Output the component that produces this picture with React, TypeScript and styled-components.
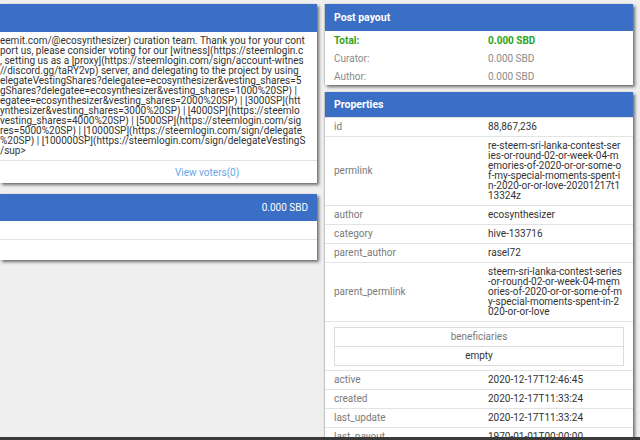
import { FC } from "react";
import styled, { createGlobalStyle } from "styled-components";

const GlobalStyle = createGlobalStyle`
  html, body {
    margin: 0;
    padding: 0;
    overflow: hidden;
    background-color: #efefef;
  }
  body {
    font-family: Roboto, "Liberation Sans", Arial, sans-serif;
    font-size: 10px;
    color: #333;
  }
`;

const Page = styled.div`
  display: flex;
  align-items: flex-start;
  gap: 8px;
  padding-top: 4px;
  height: 440px;
  box-sizing: border-box;
`;

const LeftColumn = styled.div`
  width: 317px;
  flex-shrink: 0;
  display: flex;
  flex-direction: column;
  gap: 11px;
`;

const RightColumn = styled.div`
  width: 308px;
  flex-shrink: 0;
  display: flex;
  flex-direction: column;
  gap: 7px;
`;

const Card = styled.section`
  background-color: #fff;
  box-shadow: 2px 2px 3px rgba(0, 0, 0, 0.55), -1px 0 1px rgba(0, 0, 0, 0.15);
  overflow: hidden;
`;

type HeaderProps = { $height: number; $end?: boolean };
const CardHeader = styled.header<HeaderProps>`
  height: ${(p) => p.$height}px;
  background-color: #3b6fc6;
  color: #fff;
  display: flex;
  align-items: center;
  justify-content: ${(p) => (p.$end ? "flex-end" : "flex-start")};
  padding: 0 9px;
  box-sizing: border-box;
`;

const HeaderTitle = styled.span`
  font-weight: 700;
  font-size: 10.5px;
`;

const HeaderValue = styled.span`
  font-size: 10px;
`;

const CodeBlock = styled.div`
  padding: 4px 9px 4px 0;
  line-height: 10px;
  color: #333;
`;

const CodeLine = styled.div`
  white-space: nowrap;
  overflow: hidden;
`;

const CardFooter = styled.div`
  height: 22px;
  border-top: 1px solid #e2e2e2;
  display: flex;
  align-items: center;
  padding-left: 175px;
  color: #6aa6e8;
`;

type EmptyRowProps = { $height: number };
const EmptyRow = styled.div<EmptyRowProps>`
  height: ${(p) => p.$height}px;
  & + & {
    border-top: 1px solid #e2e2e2;
  }
`;

type PayoutRowProps = { $tone: "total" | "muted" };
const PayoutRow = styled.div<PayoutRowProps>`
  display: grid;
  grid-template-columns: 154px 154px;
  height: 18px;
  align-items: center;
  color: ${(p) => (p.$tone === "total" ? "#2ea31a" : "#8a8a8a")};
  font-weight: ${(p) => (p.$tone === "total" ? 700 : 400)};
`;

const PayoutCell = styled.span`
  padding: 0 9px;
`;

const PropTable = styled.table`
  width: 100%;
  border-collapse: collapse;
  table-layout: fixed;
`;

type CellProps = { $label?: boolean };
const Cell = styled.td<CellProps>`
  padding: 4px 9px;
  line-height: 10px;
  border-top: 1px solid #e3e3e3;
  vertical-align: middle;
  color: ${(p) => (p.$label ? "#7a7a7a" : "#333")};
`;

// long permlinks wrap mid-word, as in the page they come from
const WrapLine = styled.span`
  display: block;
  white-space: nowrap;
`;

const NestedCell = styled.td`
  padding: 5px 9px 4px;
  border-top: 1px solid #e3e3e3;
`;

const NestedTable = styled.table`
  width: 100%;
  border-collapse: collapse;
  border: 1px solid #dcdcdc;
`;

type NestedTdProps = { $muted?: boolean };
const NestedTd = styled.td<NestedTdProps>`
  text-align: center;
  padding: 4px;
  line-height: 10px;
  color: ${(p) => (p.$muted ? "#7a7a7a" : "#333")};
  border-top: 1px solid #dcdcdc;
`;

const WindowEdge = styled.div`
  position: fixed;
  left: 0;
  right: 0;
  bottom: 0;
  height: 3px;
  background-color: #3a3a3a;
`;

const bodyLines = [
  "eemit.com/@ecosynthesizer) curation team. Thank you for your cont",
  "port us, please consider voting for our [witness](https://steemlogin.c",
  ", setting us as a [proxy](https://steemlogin.com/sign/account-witnes",
  "//discord.gg/taRY2vp) server, and delegating to the project by using",
  "elegateVestingShares?delegatee=ecosynthesizer&vesting_shares=5",
  "gShares?delegatee=ecosynthesizer&vesting_shares=1000%20SP) |",
  "egatee=ecosynthesizer&vesting_shares=2000%20SP) | [3000SP](htt",
  "ynthesizer&vesting_shares=3000%20SP) | [4000SP](https://steemlo",
  "vesting_shares=4000%20SP) | [5000SP](https://steemlogin.com/sig",
  "res=5000%20SP) | [10000SP](https://steemlogin.com/sign/delegate",
  "%20SP) | [100000SP](https://steemlogin.com/sign/delegateVestingS",
  "/sup>",
];

type Prop = [string, string | string[]];

const upperProps: Prop[] = [
  ["id", "88,867,236"],
  [
    "permlink",
    [
      "re-steem-sri-lanka-contest-ser",
      "ies-or-round-02-or-week-04-m",
      "emories-of-2020-or-or-some-o",
      "f-my-special-moments-spent-i",
      "n-2020-or-or-love-20201217t1",
      "13324z",
    ],
  ],
  ["author", "ecosynthesizer"],
  ["category", "hive-133716"],
  ["parent_author", "rasel72"],
  [
    "parent_permlink",
    [
      "steem-sri-lanka-contest-series",
      "-or-round-02-or-week-04-mem",
      "ories-of-2020-or-or-some-of-m",
      "y-special-moments-spent-in-2",
      "020-or-or-love",
    ],
  ],
];

const lowerProps: Prop[] = [
  ["active", "2020-12-17T12:46:45"],
  ["created", "2020-12-17T11:33:24"],
  ["last_update", "2020-12-17T11:33:24"],
  ["last_payout", "1970-01-01T00:00:00"],
];

const PropRow: FC<{ name: string; value: string | string[] }> = ({ name, value }) => (
  <tr>
    <Cell $label>{name}</Cell>
    <Cell>
      {Array.isArray(value)
        ? value.map((part, i) => <WrapLine key={i}>{part}</WrapLine>)
        : value}
    </Cell>
  </tr>
);

const App: FC = () => {
  return (
    <>
      <GlobalStyle />
      <Page>
        <LeftColumn>
          <Card>
            <CardHeader $height={28} />
            <CodeBlock>
              {bodyLines.map((line, i) => (
                <CodeLine key={i}>{line}</CodeLine>
              ))}
            </CodeBlock>
            <CardFooter>View voters(0)</CardFooter>
          </Card>
          <Card>
            <CardHeader $height={27} $end>
              <HeaderValue>0.000 SBD</HeaderValue>
            </CardHeader>
            <EmptyRow $height={18} />
            <EmptyRow $height={20} />
          </Card>
        </LeftColumn>

        <RightColumn>
          <Card>
            <CardHeader $height={27}>
              <HeaderTitle>Post payout</HeaderTitle>
            </CardHeader>
            <PayoutRow $tone="total">
              <PayoutCell>Total:</PayoutCell>
              <PayoutCell>0.000 SBD</PayoutCell>
            </PayoutRow>
            <PayoutRow $tone="muted">
              <PayoutCell>Curator:</PayoutCell>
              <PayoutCell>0.000 SBD</PayoutCell>
            </PayoutRow>
            <PayoutRow $tone="muted">
              <PayoutCell>Author:</PayoutCell>
              <PayoutCell>0.000 SBD</PayoutCell>
            </PayoutRow>
          </Card>
          <Card>
            <CardHeader $height={25}>
              <HeaderTitle>Properties</HeaderTitle>
            </CardHeader>
            <PropTable>
              <tbody>
                {upperProps.map(([k, v]) => (
                  <PropRow key={k} name={k} value={v} />
                ))}
                <tr>
                  <NestedCell colSpan={2}>
                    <NestedTable>
                      <tbody>
                        <tr>
                          <NestedTd $muted>beneficiaries</NestedTd>
                        </tr>
                        <tr>
                          <NestedTd>empty</NestedTd>
                        </tr>
                      </tbody>
                    </NestedTable>
                  </NestedCell>
                </tr>
                {lowerProps.map(([k, v]) => (
                  <PropRow key={k} name={k} value={v} />
                ))}
              </tbody>
            </PropTable>
          </Card>
        </RightColumn>
      </Page>
      <WindowEdge />
    </>
  );
};

export default App;
